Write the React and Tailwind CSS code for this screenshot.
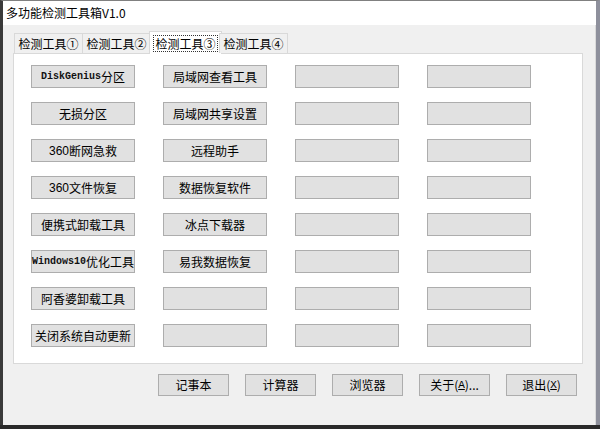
import React from 'react';

const cjk = { fontFamily: '"Noto Sans CJK SC", "Liberation Sans", sans-serif' };

const tabs = ['检测工具①', '检测工具②', '检测工具③', '检测工具④'];

// each row: 4 columns; latin parts rendered in a narrow mono face like SimSun
const rows = [
  [['DiskGenius', '分区'], '局域网查看工具', '', ''],
  ['无损分区', '局域网共享设置', '', ''],
  ['360断网急救', '远程助手', '', ''],
  ['360文件恢复', '数据恢复软件', '', ''],
  ['便携式卸载工具', '冰点下载器', '', ''],
  [['Windows10', '优化工具'], '易我数据恢复', '', ''],
  ['阿香婆卸载工具', '', '', ''],
  ['关闭系统自动更新', '', '', ''],
];

function Label({ value }) {
  if (Array.isArray(value)) {
    return (
      <>
        <span className="font-['Liberation_Mono'] font-bold text-[10px] text-[#111]">{value[0]}</span>
        <span>{value[1]}</span>
      </>
    );
  }
  // "360" prefix is half-width in the original
  const m = value.match(/^(\d+)(.*)$/);
  if (m) {
    return (
      <>
        <span className="font-['Liberation_Sans'] text-[12px]">{m[1]}</span>
        <span>{m[2]}</span>
      </>
    );
  }
  return value;
}

function ToolButton({ value }) {
  return (
    <div className="w-[104px] h-[23px] bg-[#e1e1e1] border border-[#adadad] flex items-center justify-center text-[12px] text-black leading-none whitespace-nowrap">
      {value ? <Label value={value} /> : null}
    </div>
  );
}

function BottomButton({ children }) {
  return (
    <div className="w-[71px] h-[22px] bg-[#e1e1e1] border border-[#adadad] flex items-center justify-center text-[12px] text-black">
      {children}
    </div>
  );
}

export default function App() {
  return (
    <div className="w-[600px] h-[429px] bg-[#2a2a2a] overflow-hidden" style={cjk}>
      {/* Window */}
      <div className="w-[600px] h-[425px] flex flex-col border-l-[3px] border-l-[#3a3a3a] border-r-[4px] border-r-[#8e909c] border-t border-t-[#808080]">
        {/* Title bar */}
        <div className="h-[24px] bg-white flex items-center pl-[3px] text-[12px] text-black">
          多功能检测工具箱V1.0
        </div>

        {/* Body */}
        <div className="flex-1 bg-[#f0f0f0] pl-[10px] pt-[6px] border-r border-r-[#dadada]">
          {/* Tabs */}
          <div className="flex items-end h-[22px] pl-[1px] relative z-10">
            {tabs.map((t, i) =>
              i === 2 ? (
                <div
                  key={t}
                  className="w-[73px] h-[23px] -mx-[2px] -mb-[1px] bg-white border border-b-0 border-[#d9d9d9] flex items-center justify-center text-[12px] text-black"
                >
                  <span className="outline-1 outline-dotted outline-[#333] px-[1px] leading-[15px]">{t}</span>
                </div>
              ) : (
                <div
                  key={t}
                  className="w-[69px] h-[20px] bg-[#f0f0f0] border border-b-0 border-[#d9d9d9] -ml-[1px] first:ml-0 flex items-center justify-center text-[12px] text-black"
                >
                  {t}
                </div>
              )
            )}
          </div>

          {/* Panel */}
          <div className="w-[570px] h-[311px] bg-white border border-[#d9d9d9] pl-[17px] pt-[11px]">
            <div className="grid grid-cols-[repeat(4,104px)] gap-x-[28px] gap-y-[14px]">
              {rows.flat().map((v, i) => (
                <ToolButton key={i} value={v} />
              ))}
            </div>
          </div>

          {/* Bottom buttons */}
          <div className="flex gap-[16px] ml-[145px] mt-[10px]">
            <BottomButton>记事本</BottomButton>
            <BottomButton>计算器</BottomButton>
            <BottomButton>浏览器</BottomButton>
            <BottomButton>
              关于(<span className="underline font-['Liberation_Mono'] text-[11px]">A</span>)...
            </BottomButton>
            <BottomButton>
              退出(<span className="underline font-['Liberation_Mono'] text-[11px]">X</span>)
            </BottomButton>
          </div>
        </div>
      </div>
    </div>
  );
}
